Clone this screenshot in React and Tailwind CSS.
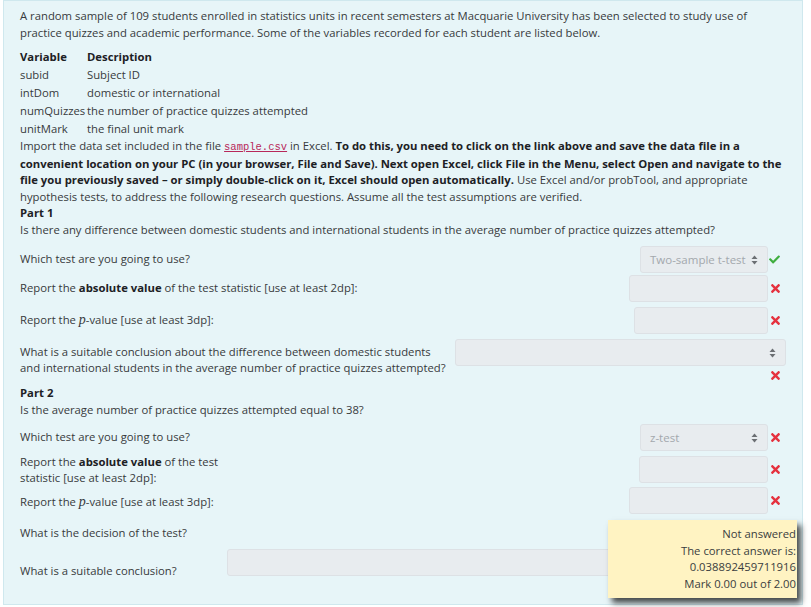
import React from "react";
import { FaCheck, FaTimes } from "react-icons/fa";

const F = { fontFamily: '"Open Sans", "Noto Sans", sans-serif' };

function Arrows() {
  return (
    <svg width="7" height="10" viewBox="0 0 7 10" className="shrink-0">
      <path d="M3.5 0.5 L6.5 4 L0.5 4 Z" fill="#6b6f73" />
      <path d="M3.5 9.5 L6.5 6 L0.5 6 Z" fill="#6b6f73" />
    </svg>
  );
}

function Box({ w, text, select }) {
  return (
    <div
      className="h-[27px] rounded-[3px] border border-[#dde1e5] bg-[#e8ecef] flex items-center justify-between pl-[9px] pr-[9px] text-[#a3a8ad] text-[11.5px]"
      style={{ width: w }}
    >
      <span>{text || ""}</span>
      {select ? <Arrows /> : null}
    </div>
  );
}

function Ok() {
  return (
    <div className="w-[18px] flex items-center pl-[1px]">
      <FaCheck className="text-[#3fae3f]" size={11} />
    </div>
  );
}
function Bad() {
  return (
    <div className="w-[18px] flex items-center pl-[1px]">
      <FaTimes className="text-[#e5323f]" size={13} />
    </div>
  );
}

function PVal() {
  return (
    <span className="italic text-[14px] leading-none" style={{ fontFamily: '"Liberation Serif", serif' }}>
      p
    </span>
  );
}

export default function App() {
  return (
    <div className="w-[811px] h-[607px] bg-white overflow-hidden relative text-[#373a3c] text-[11.3px]" style={F}>
      <div className="ml-[3px] w-[800px] h-[605px] border border-[#cfe8ee] bg-[#e7f5f8] pl-[16px] pr-[16px] pt-[7px]">
        <div className="leading-[16.5px] whitespace-nowrap">
          A random sample of 109 students enrolled in statistics units in recent semesters at Macquarie University has been selected to study use of
          <br />
          practice quizzes and academic performance. Some of the variables recorded for each student are listed below.
        </div>
        <div className="mt-[7px] whitespace-nowrap">
          {[
            ["Variable", "Description", true],
            ["subid", "Subject ID"],
            ["intDom", "domestic or international"],
            ["numQuizzes", "the number of practice quizzes attempted"],
            ["unitMark", "the final unit mark"],
          ].map(([a, b, h]) => (
            <div key={a} className={"flex h-[18px] items-center " + (h ? "font-bold text-[#1d2125]" : "")}>
              <div className="w-[67px]">{a}</div>
              <div>{b}</div>
            </div>
          ))}
        </div>
        <div className="leading-[16.5px] whitespace-nowrap">
          Import the data set included in the file{" "}
          <span className="text-[#b8285a] underline text-[10.5px]" style={{ fontFamily: '"Liberation Mono", monospace' }}>
            sample.csv
          </span>{" "}
          in Excel. <b className="text-[#1d2125]">To do this, you need to click on the link above and save the data file in a</b>
          <br />
          <b className="text-[#1d2125]">
            convenient location on your PC (in your browser, File and Save). Next open Excel, click File in the Menu, select Open and navigate to the
          </b>
          <br />
          <b className="text-[#1d2125]">file you previously saved – or simply double-click on it, Excel should open automatically.</b> Use Excel and/or probTool, and appropriate
          <br />
          hypothesis tests, to address the following research questions. Assume all the test assumptions are verified.
          <br />
          <b className="text-[#1d2125]">Part 1</b>
          <br />
          Is there any difference between domestic students and international students in the average number of practice quizzes attempted?
        </div>

        {/* Part 1 rows */}
        <div className="mt-[8px] flex items-center justify-between h-[27px]">
          <div>Which test are you going to use?</div>
          <div className="flex items-center">
            <Box w={128} text="Two-sample t-test" select />
            <Ok />
          </div>
        </div>
        <div className="mt-[2px] flex items-center justify-between h-[27px]">
          <div>
            Report the <b className="text-[#1d2125]">absolute value</b> of the test statistic [use at least 2dp]:
          </div>
          <div className="flex items-center">
            <Box w={139} />
            <Bad />
          </div>
        </div>
        <div className="mt-[5px] flex items-center justify-between h-[27px]">
          <div>
            Report the <PVal />-value [use at least 3dp]:
          </div>
          <div className="flex items-center">
            <Box w={134} />
            <Bad />
          </div>
        </div>
        <div className="mt-[5px] flex items-center justify-between">
          <div className="leading-[16px] whitespace-nowrap pb-[4px]">
            What is a suitable conclusion about the difference between domestic students
            <br />
            and international students in the average number of practice quizzes attempted?
          </div>
          <div className="flex flex-col items-end">
            <Box w={331} select />
            <div className="h-[18px] flex items-center">
              <Bad />
            </div>
          </div>
        </div>

        <div className="leading-[16.5px] mt-[1px]">
          <b className="text-[#1d2125]">Part 2</b>
          <br />
          Is the average number of practice quizzes attempted equal to 38?
        </div>

        {/* Part 2 rows */}
        <div className="mt-[6px] flex items-center justify-between h-[27px]">
          <div>Which test are you going to use?</div>
          <div className="flex items-center">
            <Box w={128} text="z-test" select />
            <Bad />
          </div>
        </div>
        <div className="mt-[2px] flex items-center justify-between h-[32px]">
          <div className="leading-[16px] whitespace-nowrap pt-[2px]">
            Report the <b className="text-[#1d2125]">absolute value</b> of the test
            <br />
            statistic [use at least 2dp]:
          </div>
          <div className="flex items-center">
            <Box w={129} />
            <Bad />
          </div>
        </div>
        <div className="mt-[2px] flex items-center justify-between h-[27px]">
          <div className="pt-[4px]">
            Report the <PVal />-value [use at least 3dp]:
          </div>
          <div className="flex items-center">
            <Box w={139} />
            <Bad />
          </div>
        </div>
        <div className="mt-[6px] flex items-center justify-between h-[27px]">
          <div>What is the decision of the test?</div>
          <div className="flex items-center">
            <Box w={125} />
            <Bad />
          </div>
        </div>
        <div className="mt-[2px] flex items-center">
          <div className="w-[207px]">What is a suitable conclusion?</div>
          <div className="flex flex-col items-end">
            <Box w={559} />
            <div className="h-[18px] flex items-center">
              <Bad />
            </div>
          </div>
        </div>
      </div>

      <div className="absolute left-[608px] top-[520px] w-[189px] h-[78px] bg-[#fff3c2] shadow-[4px_5px_6px_rgba(0,0,0,0.7)] text-right pr-[1px] pt-[6px] leading-[16.5px] text-[#3a3d40]">
        Not answered
        <br />
        The correct answer is:
        <br />
        0.038892459711916
        <br />
        Mark 0.00 out of 2.00
      </div>
    </div>
  );
}
